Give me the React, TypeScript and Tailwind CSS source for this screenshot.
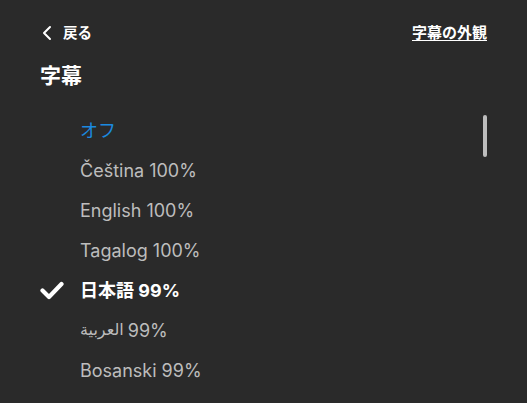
const items = [
  { label: "オフ", blue: true },
  { label: "Čeština 100%" },
  { label: "English 100%" },
  { label: "Tagalog 100%" },
  { label: "日本語 99%", active: true },
  { label: "العربية 99%", rtl: true },
  { label: "Bosanski 99%" },
];

function Check() {
  return (
    <svg width="24" height="19" viewBox="0 0 24 19" fill="none">
      <path d="M2.5 9.5l6.5 6.5L21.5 3" stroke="white" strokeWidth="4.2" strokeLinecap="round" strokeLinejoin="round" />
    </svg>
  );
}

export default function App() {
  return (
    <div
      className="relative h-[403px] w-[527px] overflow-hidden bg-[#2a2a2a] text-white"
      style={{ fontFamily: 'Inter, "Noto Sans CJK JP", sans-serif' }}
    >
      <div className="flex items-center justify-between pl-[42px] pr-10 pt-[23px]">
        <div className="flex items-center gap-[11px] text-[14.5px] font-bold leading-5">
          <svg width="10" height="16" viewBox="0 0 10 16" fill="none">
            <path d="M8 2L2 8l6 6" stroke="white" strokeWidth="2" strokeLinecap="round" strokeLinejoin="round" />
          </svg>
          <span>戻る</span>
        </div>
        <span className="text-[15px] font-bold leading-5 underline underline-offset-2">字幕の外観</span>
      </div>

      <h1 className="mt-[18px] pl-10 text-[21px] font-bold leading-[30px]">字幕</h1>

      <ul className="mt-[19px]">
        {items.map((it) => (
          <li key={it.label} className="flex h-10 items-center pl-10">
            <div className="flex w-10 items-center">{it.active && <Check />}</div>
            <span
              className={
                it.active
                  ? "text-[18px] font-bold text-white"
                  : it.blue
                    ? "text-[18px] text-[#1b8ae0]"
                    : "text-[18px] text-[#bdbdbd]"
              }
            >
              {it.rtl ? (
                <span className="flex items-center gap-[4px]">
                  <bdi dir="rtl" style={{ fontFamily: '"DejaVu Sans", sans-serif', fontSize: 16 }}>
                    العربية
                  </bdi>
                  <span>99%</span>
                </span>
              ) : (
                it.label
              )}
            </span>
          </li>
        ))}
      </ul>

      <div className="absolute right-[40px] top-[115px] h-[42px] w-[4px] rounded-full bg-[#bdbdbd]" />
    </div>
  );
}
